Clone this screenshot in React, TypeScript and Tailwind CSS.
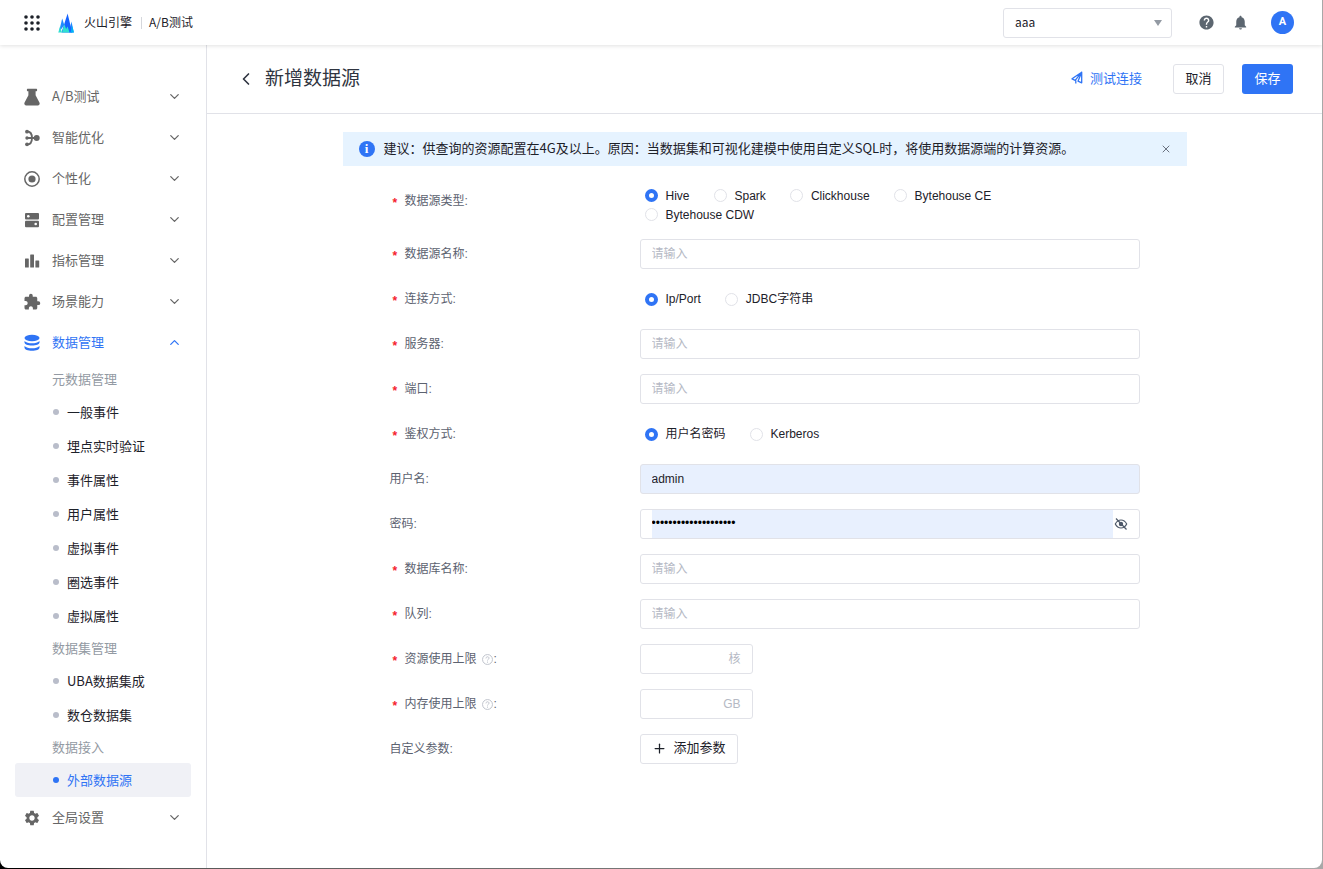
import { useState } from "react";
import type { ReactNode } from "react";
import clsx from "clsx";
import { ChevronDown, ChevronLeft, ChevronUp, Plus, X } from "lucide-react";
import { MdExtension, MdHelp, MdNotifications, MdSettings } from "react-icons/md";

function FlaskIcon() {
  return (
    <svg width="16" height="18" viewBox="0 0 16 18" fill="currentColor" aria-hidden="true">
      <path d="M3.500.8h9a.6.6 0 0 1 .6.6v1.200a.6.6 0 0 1-.6.6h-.9v4l3.800 7.300c.7 1.400 0 3-1.500 3H2.100c-1.500 0-2.200-1.600-1.500-3l3.800-7.300v-4h-.9a.6.6 0 0 1-.6-.6V1.400a.6.6 0 0 1 .6-.6z" />
    </svg>
  );
}

function BranchIcon() {
  return (
    <svg width="16" height="18" viewBox="0 0 16 18" fill="none" stroke="currentColor" strokeWidth="1.800" aria-hidden="true">
      <path d="M3 2.500c3.500 0 5 2.500 5 6.500s-1.500 6.500-5 6.500M3 9h9" />
      <g fill="currentColor" stroke="none">
        <circle cx="3" cy="2.700" r="1.900" />
        <circle cx="3" cy="15.300" r="1.900" />
        <circle cx="3" cy="9" r="1.700" />
        <circle cx="12.700" cy="9" r="3" />
      </g>
    </svg>
  );
}

function TargetIcon() {
  return (
    <svg width="16" height="18" viewBox="0 0 16 18" aria-hidden="true">
      <circle cx="8" cy="9" r="7.200" fill="none" stroke="currentColor" strokeWidth="1.500" />
      <circle cx="8" cy="9" r="3.600" fill="currentColor" />
    </svg>
  );
}

function ServerIcon() {
  return (
    <svg width="16" height="18" viewBox="0 0 16 18" aria-hidden="true">
      <rect x="1" y="2" width="14" height="6.400" rx="1" fill="currentColor" />
      <rect x="1" y="9.800" width="14" height="6.400" rx="1" fill="currentColor" />
      <circle cx="4.300" cy="5.200" r="1.300" fill="white" />
      <circle cx="11.700" cy="13" r="1.300" fill="white" />
    </svg>
  );
}

function BarsIcon() {
  return (
    <svg width="16" height="18" viewBox="0 0 16 18" fill="currentColor" aria-hidden="true">
      <rect x="1" y="6.500" width="3.800" height="9" rx=".5" />
      <rect x="6.200" y="2.500" width="3.800" height="13" rx=".5" />
      <rect x="11.400" y="8.500" width="3.800" height="7" rx=".5" />
    </svg>
  );
}

function DatabaseIcon() {
  return (
    <svg width="16" height="18" viewBox="0 0 16 18" fill="currentColor" aria-hidden="true">
      <ellipse cx="8" cy="4" rx="7.500" ry="3.200" />
      <path d="M.5 7C2 8.600 5 9.300 8 9.300s6-.7 7.500-2.300v1.600c0 1.700-3.400 3-7.500 3s-7.500-1.300-7.500-3z" />
      <path d="M.5 11.900c1.500 1.600 4.500 2.300 7.500 2.300s6-.7 7.500-2.300v1.800c0 1.700-3.400 3-7.500 3s-7.500-1.300-7.500-3z" />
    </svg>
  );
}

function VolcanoLogo() {
  return (
    <svg width="16" height="20" viewBox="0 0 16 20" aria-hidden="true">
      <path d="M.8 19.500 4.200 5.500 6.300 12z" fill="#1f8bff" />
      <path d="M15.800 19.500 13.500 8.500 11 19.500z" fill="#1f8bff" />
      <path d="M3.500 19.500 9.600.5l4.600 19z" fill="#1664ff" />
      <path d="M.3 19.500 2 13.500l2 6z" fill="#2fe0d0" />
      <path d="M4 19.500 6.300 11l1.800 5 1.500-2.500 1.900 6z" fill="#2fe0d0" />
      <path d="M12.500 19.500 14.200 13l1.800 6.500z" fill="#00b4f5" />
    </svg>
  );
}

function AppsIcon() {
  const steps = [2, 8, 14];
  return (
    <svg width="16" height="16" viewBox="0 0 16 16" fill="#1d2129" aria-hidden="true">
      {steps.map((y) => steps.map((x) => <circle key={`${x}-${y}`} cx={x} cy={y} r="1.800" />))}
    </svg>
  );
}

function SendIcon() {
  return (
    <svg width="12" height="14" viewBox="0 0 12 14" fill="none" stroke="currentColor" strokeWidth="1.300" strokeLinejoin="round" aria-hidden="true">
      <path d="M10.700 1.200 1 7.800l3.200 1.500zM10.700 1.200v10.600L7 10.200zM4.800 9.500v3" />
    </svg>
  );
}

function EyeOffIcon() {
  return (
    <svg width="14" height="12" viewBox="0 0 14 12" fill="none" stroke="currentColor" strokeWidth="1.200" aria-hidden="true">
      <path d="M1.300 6c1.400-2.700 3.300-4 5.700-4s4.300 1.300 5.700 4c-1.400 2.700-3.300 4-5.700 4S2.700 8.700 1.300 6z" />
      <circle cx="7" cy="6" r="1.600" fill="currentColor" />
      <path d="M2 .5 12.500 11.500" />
    </svg>
  );
}

function HintIcon() {
  return (
    <svg width="11" height="11" viewBox="0 0 10 10" fill="none" stroke="#bfc3cc" strokeWidth=".9" aria-hidden="true">
      <circle cx="5" cy="5" r="4.500" />
      <path d="M3.600 4c0-2 2.800-1.900 2.800-.2 0 1-1.400 1-1.400 2.100M5 6.900v1" />
    </svg>
  );
}

const TOP_MENU = [
  { label: "A/B测试", icon: <FlaskIcon /> },
  { label: "智能优化", icon: <BranchIcon /> },
  { label: "个性化", icon: <TargetIcon /> },
  { label: "配置管理", icon: <ServerIcon /> },
  { label: "指标管理", icon: <BarsIcon /> },
  { label: "场景能力", icon: <MdExtension size={18} /> },
];

const DATA_MENU = [
  {
    title: "元数据管理",
    items: ["一般事件", "埋点实时验证", "事件属性", "用户属性", "虚拟事件", "圈选事件", "虚拟属性"],
  },
  { title: "数据集管理", items: ["UBA数据集成", "数仓数据集"] },
  { title: "数据接入", items: ["外部数据源"] },
];

const ACTIVE_ITEM = "外部数据源";

function MenuButton({ label, icon, open }: { label: string; icon: ReactNode; open?: boolean }) {
  const Arrow = open ? ChevronUp : ChevronDown;
  return (
    <button
      type="button"
      aria-expanded={!!open}
      className={clsx("flex h-[41px] w-full items-center px-6", open ? "text-[#2f74f5]" : "text-[#666666]")}
    >
      <span className="mr-3 flex w-4 shrink-0 justify-center">
        <span className="shrink-0">{icon}</span>
      </span>
      <span className="flex-1 pb-px text-left">{label}</span>
      <Arrow size={15} strokeWidth={2} />
    </button>
  );
}

function Sidebar() {
  return (
    <nav className="w-[207px] shrink-0 border-r border-[#e1e2e8] pt-[31px] text-[13px]">
      {TOP_MENU.map((item) => (
        <MenuButton key={item.label} label={item.label} icon={item.icon} />
      ))}
      <MenuButton label="数据管理" icon={<DatabaseIcon />} open />
      <div className="pt-px">
        {DATA_MENU.map((group) => (
          <section key={group.title}>
            <h2 className="flex h-[31px] items-center pb-px pl-[52px] text-[#939aa3]">{group.title}</h2>
            <ul>
              {group.items.map((item) => (
                <li key={item} className="px-[15px]">
                  <a
                    href="#"
                    className={clsx(
                      "flex h-[34px] items-center gap-2 rounded-[3px] pl-[38px]",
                      item === ACTIVE_ITEM ? "bg-[#f0f1f6] text-[#2f74f5]" : "text-[#1d2129]"
                    )}
                  >
                    <span
                      className={clsx("size-1.5 rounded-full", item === ACTIVE_ITEM ? "bg-[#2f74f5]" : "bg-[#b9bdca]")}
                    />
                    {item}
                  </a>
                </li>
              ))}
            </ul>
          </section>
        ))}
      </div>
      <MenuButton label="全局设置" icon={<MdSettings size={18} />} />
    </nav>
  );
}

function TopBar() {
  return (
    <header className="relative z-10 flex h-[45px] shrink-0 items-center bg-white pl-6 pr-7 text-xs text-[#1d2129] shadow-[0_1px_4px_rgba(0,0,0,0.12)]">
      <button type="button" aria-label="应用列表">
        <AppsIcon />
      </button>
      <a href="#" className="ml-[18px] flex items-center gap-2.5">
        <VolcanoLogo />
        <span className="pb-0.5">火山引擎</span>
      </a>
      <span className="ml-[9px] mr-[7px] h-3 w-px bg-[#d5d7dc]" />
      <span className="pb-0.5">A/B测试</span>
      <div className="relative ml-auto">
        <select
          aria-label="项目"
          className="h-[30px] w-[169px] appearance-none rounded-[3px] border border-[#e1e2e8] bg-white px-[11px] pb-px"
        >
          <option>aaa</option>
        </select>
        <span className="pointer-events-none absolute right-2.5 top-3 border-x-4 border-t-[6px] border-x-transparent border-t-[#939aa3]" />
      </div>
      <button type="button" aria-label="帮助" className="ml-[26px] text-[#5c6670]">
        <MdHelp size={17} />
      </button>
      <button type="button" aria-label="通知" className="ml-[17px] text-[#5c6670]">
        <MdNotifications size={17} />
      </button>
      <button
        type="button"
        className="ml-[22px] size-[23px] rounded-full bg-[#2f74f5] font-[Roboto,sans-serif] text-[11px] font-bold text-white"
      >
        A
      </button>
    </header>
  );
}

function Field({
  label,
  htmlFor,
  required,
  hint,
  children,
}: {
  label: string;
  htmlFor?: string;
  required?: boolean;
  hint?: boolean;
  children: ReactNode;
}) {
  return (
    <div className="grid grid-cols-3">
      <label htmlFor={htmlFor} className="flex h-[30px] items-center text-[#5c6270]">
        {required && <span className="w-[15px] pl-[3px] pt-1 font-bold text-[#f5222d]">*</span>}
        {label}
        {hint && (
          <span className="ml-[5px] mr-px">
            <HintIcon />
          </span>
        )}
        :
      </label>
      <div className="col-span-2">{children}</div>
    </div>
  );
}

const inputClass =
  "block h-[30px] w-full rounded-[3px] border border-[#e1e2e8] px-[11px] pb-px text-[#1d2129] outline-none placeholder:text-[#b5b9c4] focus:border-[#2f74f5]";

function TextField({ id, label }: { id: string; label: string }) {
  return (
    <Field label={label} htmlFor={id} required>
      <input id={id} type="text" placeholder="请输入" className={inputClass} />
    </Field>
  );
}

function LimitField({ id, label, unit }: { id: string; label: string; unit: string }) {
  return (
    <Field label={label} htmlFor={id} required hint>
      <div className="flex h-[30px] w-[113px] items-center rounded-[3px] border border-[#e1e2e8] px-[11px]">
        <input id={id} type="text" className="min-w-0 flex-1 outline-none" />
        <span className="text-[#b5b9c4]">{unit}</span>
      </div>
    </Field>
  );
}

function RadioField({ name, label, options }: { name: string; label: string; options: string[] }) {
  const [value, setValue] = useState(options[0]);
  return (
    <Field label={label} required>
      <div role="radiogroup" aria-label={label} className="flex min-h-[30px] flex-wrap items-center pl-[5px] text-[#1d2129]">
        {options.map((option) => (
          <label key={option} className="mr-6 flex h-[19px] items-center gap-2">
            <input
              type="radio"
              name={name}
              checked={value === option}
              onChange={() => setValue(option)}
              className="size-[13px] appearance-none rounded-full border border-[#e1e2e8] bg-white checked:border-[4px] checked:border-[#2f74f5]"
            />
            {option}
          </label>
        ))}
      </div>
    </Field>
  );
}

function PageHeader() {
  return (
    <div className="flex h-[69px] items-center border-b border-[#e1e2e8] px-[29px] text-[13px]">
      <button type="button" aria-label="返回" className="text-[#2f3440]">
        <ChevronLeft size={20} strokeWidth={2} />
      </button>
      <h1 className="ml-[9px] pb-[3px] text-[19px] text-[#2f3440]">新增数据源</h1>
      <button type="button" className="ml-auto flex items-center gap-[7px] pb-[3px] text-[#2f74f5]">
        <SendIcon />
        测试连接
      </button>
      <button
        type="button"
        className="ml-[31px] h-[30px] w-[51px] rounded-[3px] border border-[#e1e2e8] pb-[3px] text-[#1d2129]"
      >
        取消
      </button>
      <button type="button" className="ml-[18px] h-[30px] w-[51px] rounded-[3px] bg-[#2f74f5] pb-[3px] text-white">
        保存
      </button>
    </div>
  );
}

function Notice() {
  const [visible, setVisible] = useState(true);
  if (!visible) return null;
  return (
    <div role="alert" className="flex min-h-[34px] items-center bg-[#e6f3ff] pl-4 pr-[15px] text-[13px] text-[#1d2129]">
      <span className="mr-[9px] flex size-4 shrink-0 items-center justify-center rounded-full bg-[#2f74f5] font-['Liberation_Serif',serif] text-[13px] font-bold text-white">
        i
      </span>
      <p className="flex-1 pb-0.5">
        建议：供查询的资源配置在4G及以上。原因：当数据集和可视化建模中使用自定义SQL时，将使用数据源端的计算资源。
      </p>
      <button type="button" aria-label="关闭" onClick={() => setVisible(false)} className="text-[#6b7280]">
        <X size={12} strokeWidth={2} />
      </button>
    </div>
  );
}

function DataSourceForm() {
  const [showPassword, setShowPassword] = useState(false);
  return (
    <form className="mt-5 flex flex-col gap-[15px] px-[47px] font-['Liberation_Sans','Noto_Sans_CJK_SC',sans-serif] text-xs">
      <RadioField
        name="type"
        label="数据源类型"
        options={["Hive", "Spark", "Clickhouse", "Bytehouse CE", "Bytehouse CDW"]}
      />
      <TextField id="name" label="数据源名称" />
      <RadioField name="connection" label="连接方式" options={["Ip/Port", "JDBC字符串"]} />
      <TextField id="server" label="服务器" />
      <TextField id="port" label="端口" />
      <RadioField name="auth" label="鉴权方式" options={["用户名密码", "Kerberos"]} />
      <Field label="用户名" htmlFor="username">
        <input id="username" type="text" defaultValue="admin" className={clsx(inputClass, "bg-[#e8f0fe]")} />
      </Field>
      <Field label="密码" htmlFor="password">
        <div className="flex h-[30px] items-center rounded-[3px] border border-[#e1e2e8] px-[11px]">
          <input
            id="password"
            type={showPassword ? "text" : "password"}
            defaultValue="abcdefghijklmnopqrst"
            className="h-full min-w-0 flex-1 bg-[#e8f0fe] pb-0.5 text-black outline-none"
          />
          <button
            type="button"
            aria-label="显示密码"
            onClick={() => setShowPassword(!showPassword)}
            className="ml-px text-[#4e5969]"
          >
            <EyeOffIcon />
          </button>
        </div>
      </Field>
      <TextField id="database" label="数据库名称" />
      <TextField id="queue" label="队列" />
      <LimitField id="cpu" label="资源使用上限" unit="核" />
      <LimitField id="memory" label="内存使用上限" unit="GB" />
      <Field label="自定义参数">
        <button
          type="button"
          className="flex h-[30px] items-center gap-[7px] rounded-[3px] border border-[#e1e2e8] px-[11px] pb-0.5 text-[13px] text-[#1d2129]"
        >
          <Plus size={15} strokeWidth={2} />
          添加参数
        </button>
      </Field>
    </form>
  );
}

export default function App() {
  return (
    <div className="flex min-h-screen flex-col bg-linear-to-r from-black via-[#555555] via-10% to-[#a8a8a8] pb-px pr-px font-['Noto_Sans_CJK_SC',sans-serif]">
      <div className="flex flex-1 flex-col overflow-hidden rounded-b-lg bg-white">
        <TopBar />
        <div className="flex flex-1">
          <Sidebar />
          <main className="min-w-0 flex-1">
            <PageHeader />
            <div className="mx-auto max-w-[844px] pt-[18px]">
              <Notice />
              <DataSourceForm />
            </div>
          </main>
        </div>
      </div>
    </div>
  );
}
